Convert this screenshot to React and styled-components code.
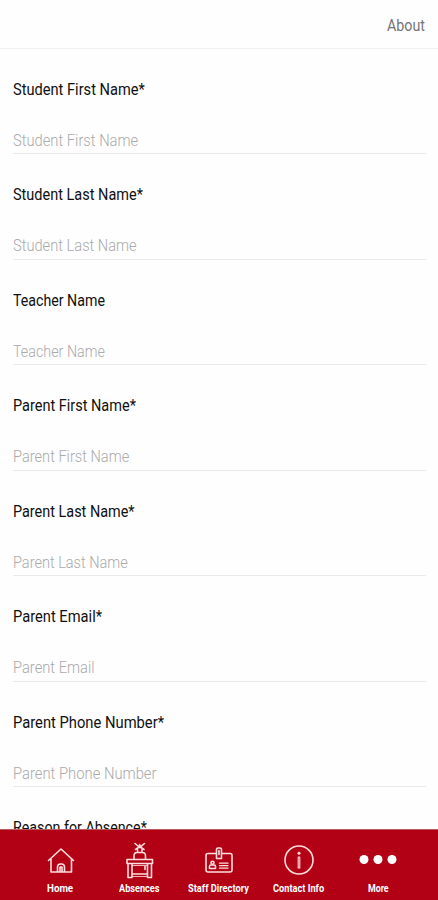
import React, { useLayoutEffect, useRef, useState } from "react";
import styled, { createGlobalStyle } from "styled-components";

const GlobalStyle = createGlobalStyle`
  * { box-sizing: border-box; }
  body { margin: 0; background: #fefefe; overflow: hidden; }
`;

const Screen = styled.div`
  display: flex;
  flex-direction: column;
  width: 438px;
  height: 900px;
  overflow: hidden;
  background: #fefefe;
  font-family: Roboto, "Liberation Sans", sans-serif;
`;

const Header = styled.header`
  display: flex;
  flex: none;
  justify-content: flex-end;
  height: 49px;
  padding: 15px 13px 0 0;
  border-bottom: 1px solid #f0f0f0;
  color: #747474;
`;

const Form = styled.main`
  flex: 1;
  min-height: 0;
  overflow: hidden;
  padding: 0 12px 0 13px;
`;

const Field = styled.div`
  display: flex;
  flex-direction: column;
  height: 105.45px;
  padding-top: 30px;
  border-bottom: 1px solid #e9e9e9;
`;

const Label = styled.label`
  height: 22px;
  color: #101010;
`;

const Value = styled.div`
  margin-top: 29px;
  height: 22px;
  color: #aaa;
`;

const TextBox = styled.span`
  display: block;
  width: ${(p) => p.$width}px;
  height: ${(p) => p.$line}px;
  white-space: nowrap;
`;

const Glyphs = styled.span`
  display: block;
  width: max-content;
  transform-origin: 0 0;
  font-size: ${(p) => p.$size}px;
  line-height: ${(p) => p.$line}px;
  font-weight: ${(p) => p.$weight};
`;

const Bar = styled.nav`
  display: flex;
  flex: none;
  height: 71px;
  padding: 0 20px;
  background: #b20015;
  border-top: 1px solid #bd5a61;
  color: #fff;
`;

const Tab = styled.a`
  display: flex;
  flex: 1;
  flex-direction: column;
  align-items: center;
  padding-top: 10px;
`;

const Icon = styled.svg`
  display: block;
  flex: none;
  width: 40px;
  height: 40px;
  margin-bottom: 2px;
  fill: none;
  stroke: #ffdede;
  stroke-width: 1.6;
  stroke-linejoin: round;
  stroke-linecap: round;
`;

function FitText({ children, width, size = 16.5, weight = 400, line = 22 }) {
  const ref = useRef(null);
  const [scale, setScale] = useState(1);
  useLayoutEffect(() => {
    setScale(width / ref.current.offsetWidth);
  }, [width, children]);
  return (
    <TextBox $width={width} $line={line}>
      <Glyphs ref={ref} $size={size} $weight={weight} $line={line} style={{ transform: `scaleX(${scale})` }}>
        {children}
      </Glyphs>
    </TextBox>
  );
}

const fields = [
  { label: "Student First Name*", width: 132, hint: "Student First Name", hintWidth: 125 },
  { label: "Student Last Name*", width: 130, hint: "Student Last Name", hintWidth: 123.5 },
  { label: "Teacher Name", width: 92, hint: "Teacher Name", hintWidth: 92 },
  { label: "Parent First Name*", width: 123, hint: "Parent First Name", hintWidth: 116 },
  { label: "Parent Last Name*", width: 121.5, hint: "Parent Last Name", hintWidth: 114.5 },
  { label: "Parent Email*", width: 89, hint: "Parent Email", hintWidth: 82 },
  { label: "Parent Phone Number*", width: 151, hint: "Parent Phone Number", hintWidth: 143.5 },
  { label: "Reason for Absence*", width: 134 },
];

/* Icons share a 40x40 box centred above each tab caption. */
const HomeIcon = () => (
  <Icon viewBox="0 0 40 40">
    <path d="M8.5 20.5 21 9l12.500 11.500M11 18.500V32h20.500V18.500M17.500 32v-5a3 3 0 0 1 3-3h1a3 3 0 0 1 3 3v5M20 32v-5h2v5" />
  </Icon>
);

const DeskIcon = () => (
  <Icon viewBox="0 0 40 40">
    <path d="M16 3.500l3 2.500h3.500l3-2.500M20.700 4.500v3M16.500 9.500l3-2h2.500l3 2M18.500 9.500v3M23 9.500v3M15 19v-3q0-3.500 3-3.500h5.500q3 0 3 3.500v3M8 19.500h25.500v4H8zM9 23.500v14h4v-14M28.500 23.500v14h4v-14M13 34h15.500M26 26.500v3" />
    <path d="M13 25.500h15.500M13 36.500h15.500" strokeWidth=".8" />
  </Icon>
);

const BadgeIcon = () => (
  <Icon viewBox="0 0 40 40">
    <path d="M17.500 13.500H9q-2 0-2 2V30q0 2 2 2h22q2 0 2-2V15.500q0-2-2-2h-8.500M17.500 9.500q0-1.500 1.500-1.500h2q1.500 0 1.500 1.500V18.500h-5zM20 10.500v4M10.500 28.500v-2q0-1.500 1.500-1.500h3q1.500 0 1.500 1.500v2z" />
    <circle cx="13.500" cy="22.700" r="1.500" />
    <path d="M20.500 23.200h8.500M20.500 25.700h8.500M20.500 28.200h8.500" strokeWidth="1.300" />
  </Icon>
);

const InfoIcon = () => (
  <Icon viewBox="0 0 40 40">
    <circle cx="20" cy="20" r="14" />
    <path d="M19.200 17h1.600v11h-1.600z" strokeWidth="1.100" />
    <circle cx="20" cy="13.200" r="1.200" fill="#ffe3e3" strokeWidth=".6" />
  </Icon>
);

const MoreIcon = () => (
  <Icon viewBox="0 0 40 40">
    <g fill="#fff" stroke="none">
      <circle cx="6" cy="19.500" r="4.500" />
      <circle cx="20" cy="19.500" r="4.500" />
      <circle cx="34" cy="19.500" r="4.500" />
    </g>
  </Icon>
);

const tabs = [
  { name: "Home", width: 26, Drawing: HomeIcon },
  { name: "Absences", width: 40, Drawing: DeskIcon },
  { name: "Staff Directory", width: 61, Drawing: BadgeIcon },
  { name: "Contact Info", width: 51, Drawing: InfoIcon },
  { name: "More", width: 21, Drawing: MoreIcon },
];

export default function App() {
  return (
    <Screen>
      <GlobalStyle />
      <Header>
        <FitText width={38}>About</FitText>
      </Header>
      <Form>
        {fields.map((f) => (
          <Field key={f.label}>
            <Label><FitText width={f.width}>{f.label}</FitText></Label>
            {f.hint && (
              <Value><FitText width={f.hintWidth} weight={300}>{f.hint}</FitText></Value>
            )}
          </Field>
        ))}
      </Form>
      <Bar>
        {tabs.map(({ name, width, Drawing }) => (
          <Tab key={name}>
            <Drawing />
            <FitText width={width} size={10.5} weight={700} line={14}>{name}</FitText>
          </Tab>
        ))}
      </Bar>
    </Screen>
  );
}
